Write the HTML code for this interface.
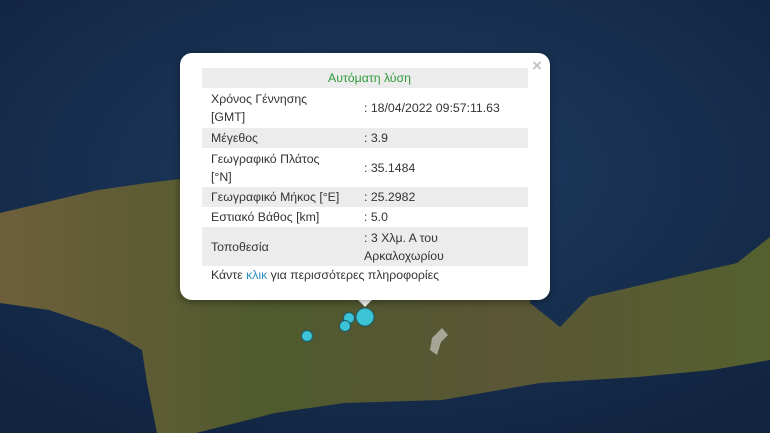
<!DOCTYPE html>
<html><head><meta charset="utf-8"><style>
html,body{margin:0;padding:0;width:770px;height:433px;overflow:hidden;background:#1a3357;font-family:"Liberation Sans",sans-serif}
.map{position:absolute;left:0;top:0}
.pop{position:absolute;left:180px;top:53px;width:370px;height:247px;background:#fff;border-radius:12px;box-shadow:0 2px 8px rgba(0,0,0,.4)}
.tip{position:absolute;left:358px;top:290px;width:14px;height:14px;background:#fff;transform:rotate(45deg)}
.x{position:absolute;left:532px;top:56px;color:#c3c3c3;font-size:17px;font-weight:bold}
table{position:absolute;left:202px;top:68px;width:326px;border-collapse:collapse;font-size:12.3px;color:#333}
td{padding:0 0 0 9px;vertical-align:middle;line-height:18px}
tr.g td{background:#ececec}
td.v{padding-left:2px}
.foot{position:absolute;left:211px;top:268px;font-size:12.3px;color:#333}
.foot span{color:#2a8fbd}
</style></head><body>
<svg class="map" width="770" height="433">
<defs><radialGradient id="s" cx="50%" cy="40%" r="70%"><stop offset="0" stop-color="#1f3d62"/><stop offset="1" stop-color="#112440"/></radialGradient>
<linearGradient id="l" x1="0" x2="1"><stop offset="0" stop-color="#6e5f3c"/><stop offset=".35" stop-color="#4f5a2e"/><stop offset=".65" stop-color="#5a5636"/><stop offset="1" stop-color="#55602f"/></linearGradient></defs>
<rect width="770" height="433" fill="url(#s)"/>
<path d="M0,213 L98,190 L147,183 L196,177 L540,227 L530,303 L560,327 L589,297 L663,280 L737,263 L770,237 L770,360 L712,370 L638,377 L540,383 L442,400 L344,403 L275,413 L196,433 L157,433 L147,383 L142,350 L108,330 L49,310 L0,303 Z" fill="url(#l)"/>
<path d="M432,338 L442,328 L448,335 L441,342 L437,355 L430,350 Z" fill="#c8c8c0" opacity=".7"/>
<g fill="#3cc3d6" stroke="#1c5a66" stroke-width="1">
<circle cx="365" cy="317" r="9"/><circle cx="349" cy="318" r="5.5"/><circle cx="345" cy="326" r="5.5"/><circle cx="307" cy="336" r="5.5"/></g>
</svg>
<div class="tip"></div>
<div class="pop"></div>
<div class="x">×</div>
<table>
<tr class="g"><td colspan="2" style="text-align:center;color:#2e9a3a;height:20px">Αυτόματη λύση</td></tr>
<tr><td style="height:40px;width:151px">Χρόνος Γέννησης<br>[GMT]</td><td class="v">: 18/04/2022 09:57:11.63</td></tr>
<tr class="g"><td style="height:20px">Μέγεθος</td><td class="v">: 3.9</td></tr>
<tr><td style="height:39px">Γεωγραφικό Πλάτος<br>[°N]</td><td class="v">: 35.1484</td></tr>
<tr class="g"><td style="height:20px">Γεωγραφικό Μήκος [°E]</td><td class="v">: 25.2982</td></tr>
<tr><td style="height:20px">Εστιακό Βάθος [km]</td><td class="v">: 5.0</td></tr>
<tr class="g"><td style="height:39px">Τοποθεσία</td><td class="v">: 3 Χλμ. Α του<br>Αρκαλοχωρίου</td></tr>
</table>
<div class="foot">Κάντε <span>κλικ</span> για περισσότερες πληροφορίες</div>
</body></html>
